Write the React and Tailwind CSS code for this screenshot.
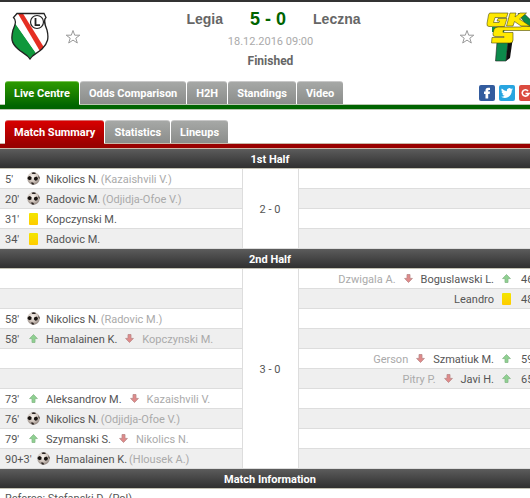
import React from "react";

function Ball() {
  return (
    <svg viewBox="0 0 13 13" className="h-[13px] w-[13px] shrink-0" aria-hidden="true">
      <defs>
        <radialGradient id="ballShade" cx="45%" cy="35%" r="65%">
          <stop offset="0" stopColor="#f7f1ec" />
          <stop offset="0.6" stopColor="#cfc4bc" />
          <stop offset="1" stopColor="#8e827c" />
        </radialGradient>
      </defs>
      <circle cx="6.5" cy="6.5" r="6.2" fill="url(#ballShade)" />
      <path d="M.8 5 2.800 4 4.600 5.200 4.400 7.600 2.200 8.200.6 6.800Z" fill="#17120f" />
      <path d="M7.200 5.400 9.400 4.600 11 6 10.300 8.300 8.200 8.700 6.800 7.300Z" fill="#17120f" />
      <path d="M4.400.8 6.800.3 9.200.9 8 2 5.400 1.900Z" fill="#2a2320" />
      <path d="M4 10.600 6 10.400 7.400 12.600 5 12.400Z" fill="#2a2320" />
      <path d="M11.400 3 12.600 5.400 12.600 7.200 11.600 5.200Z" fill="#3a302c" />
    </svg>
  );
}

function Arrow({ down }) {
  return (
    <svg viewBox="0 0 9 9" className={down ? "h-[9px] w-[9px] shrink-0 rotate-180" : "h-[9px] w-[9px] shrink-0"} aria-hidden="true">
      <path
        d="M4.500.5 8.400 4.600H6V8.500H3V4.600H.6Z"
        fill={down ? "#e08a8a" : "#8fd191"}
        stroke={down ? "#b98888" : "#86b888"}
        strokeWidth=".8"
      />
    </svg>
  );
}

function Icon({ type }) {
  return (
    <span className="flex w-[13px] shrink-0 justify-center">
      {type === "goal" && <Ball />}
      {type === "card" && (
        <span className="h-3 w-[9px] rounded-[1px] bg-linear-to-b from-[#f2e600] to-[#ffcb00]" />
      )}
      {type === "sub" && <Arrow />}
    </span>
  );
}

function HomeEvent({ event }) {
  return (
    <div className="flex items-center pl-[5px]">
      <span className="min-w-[22px] pt-[2px] pr-[5px]">{event.time}</span>
      <Icon type={event.type} />
      <span className="ml-[6px] pt-[2px]">{event.player}</span>
      {event.assist && <span className="ml-[2px] pt-[2px] text-[#aaa]">({event.assist})</span>}
      {event.out && (
        <span className="ml-2 flex items-center gap-2 text-[#aaa]">
          <Arrow down />
          <span className="pt-[2px]">{event.out}</span>
        </span>
      )}
    </div>
  );
}

function AwayEvent({ event }) {
  return (
    <div className="flex items-center justify-end">
      {event.out && (
        <span className="mr-2 flex items-center gap-2 text-[#aaa]">
          <span className="pt-[2px]">{event.out}</span>
          <Arrow down />
        </span>
      )}
      <span className="mr-[6px] pt-[2px]">{event.player}</span>
      <Icon type={event.type} />
      <span className="ml-2 w-[19px] pt-[2px]">{event.time}</span>
    </div>
  );
}

const halves = [
  {
    title: "1st Half",
    score: "2 - 0",
    rows: [
      { home: { time: "5'", type: "goal", player: "Nikolics N.", assist: "Kazaishvili V." } },
      { home: { time: "20'", type: "goal", player: "Radovic M.", assist: "Odjidja-Ofoe V." } },
      { home: { time: "31'", type: "card", player: "Kopczynski M." } },
      { home: { time: "34'", type: "card", player: "Radovic M." } },
    ],
  },
  {
    title: "2nd Half",
    score: "3 - 0",
    rows: [
      { away: { time: "46'", type: "sub", player: "Boguslawski L.", out: "Dzwigala A." } },
      { away: { time: "48'", type: "card", player: "Leandro" } },
      { home: { time: "58'", type: "goal", player: "Nikolics N.", assist: "Radovic M." } },
      { home: { time: "58'", type: "sub", player: "Hamalainen K.", out: "Kopczynski M." } },
      { away: { time: "59'", type: "sub", player: "Szmatiuk M.", out: "Gerson" } },
      { away: { time: "65'", type: "sub", player: "Javi H.", out: "Pitry P." } },
      { home: { time: "73'", type: "sub", player: "Aleksandrov M.", out: "Kazaishvili V." } },
      { home: { time: "76'", type: "goal", player: "Nikolics N.", assist: "Odjidja-Ofoe V." } },
      { home: { time: "79'", type: "sub", player: "Szymanski S.", out: "Nikolics N." } },
      { home: { time: "90+3'", type: "goal", player: "Hamalainen K.", assist: "Hlousek A." } },
    ],
  },
];

function Heading({ children }) {
  return (
    <tr>
      <th
        colSpan={3}
        className="h-5 border-b border-[#c4c2b4] bg-linear-to-b from-[#5c5c5c] to-[#303030] p-0 pt-[2px] text-center font-bold text-white"
      >
        {children}
      </th>
    </tr>
  );
}

function Tabs({ items, red }) {
  return (
    <nav className="flex h-6 items-start gap-px pl-[5px]">
      {items.map((name, i) => (
        <button
          key={name}
          type="button"
          className={
            i > 0
              ? "h-[23px] rounded-t-[3px] border-t border-[#c8c8c8] bg-linear-to-b from-[#a6a8a6] to-[#8b8d8b] px-[9px] font-bold whitespace-nowrap text-white"
              : red
                ? "relative h-[25px] rounded-t-[3px] border-t border-[#d86a6a] bg-linear-to-b from-[#d80000] to-[#990000] px-[9px] pb-[2px] font-bold whitespace-nowrap text-white"
                : "relative h-[25px] rounded-t-[3px] border-t border-[#7cc455] bg-linear-to-b from-[#2c9a00] to-[#006400] px-[9px] pb-[2px] font-bold whitespace-nowrap text-white"
          }
        >
          {name}
        </button>
      ))}
    </nav>
  );
}

function Star() {
  return (
    <button type="button" aria-label="Add to my teams" className="mt-[27px]">
      <svg viewBox="0 0 16 16" className="h-4 w-4">
        <path
          d="M8 1.500 9.700 6.200H14.800L10.800 9.200 12.300 14 8 11.100 3.700 14 5.200 9.200 1.200 6.200H6.300Z"
          fill="#fff"
          stroke="#999"
          strokeWidth="1"
        />
      </svg>
    </button>
  );
}

function LegiaCrest() {
  const outline =
    "M6 1.500H33L35 5.500C32 8 34 13 36 18 38 26 37 31 31 37 27 41 22 42 19 47 16 42 11 41 7 37 0 31 0 26 2 18 4 13 6 9 2.500 5.500Z";
  return (
    <svg viewBox="0 0 38 48" className="h-12 w-[38px]" role="img" aria-label="Legia">
      <defs>
        <clipPath id="shield">
          <path d={outline} />
        </clipPath>
      </defs>
      <g clipPath="url(#shield)">
        <path d="M0 0H38V48H0Z" fill="#fff" />
        <path d="M0 5 27 44 20 48H0Z" fill="#0f983c" />
        <path d="M0 2 3 1 31 42 27 44 1 7Z" fill="#fff" />
        <path d="M6 0H11L34 37 30 41Z" fill="#e52e22" />
      </g>
      <path d={outline} fill="none" stroke="#222" strokeWidth="1.300" />
      <circle cx="26" cy="10" r="6.500" fill="#fff" stroke="#222" strokeWidth="1.200" />
      <path d="M24.500 6V13.200H29" fill="none" stroke="#222" strokeWidth="1.800" />
    </svg>
  );
}

function LecznaCrest() {
  return (
    <svg viewBox="0 0 50 50" className="h-[50px] w-[50px]" role="img" aria-label="Leczna">
      <path d="M6 15H20L18 20H6Z" fill="#0c8a4b" />
      <path d="M11 30H22L20 49H9.500Z" fill="#0c8a4b" stroke="#222" strokeWidth=".6" />
      <path d="M22 29 27 25 24 46 20 49Z" fill="#111" />
      <path d="M32 1.500H38L50 13V16L41 14Z" fill="#0c8a4b" stroke="#222" strokeWidth=".5" />
      <g stroke="#4a4a10" strokeWidth=".6" strokeLinejoin="round" fill="#ffe900">
        <path d="M4 1H22L20.500 5.500H9L7.500 10.500H13L13.500 9H11L12 6.500H21L18.500 14.500H3Q.5 14.500 1 11.500L2.500 3Q3 1 4 1Z" />
        <path d="M24 1H30L29 5 34 1H40.500L33.500 7 44 14H35L28.500 9.500 27 14H20.500Z" />
        <path d="M50 14.500V18.500H17V20.500H27V28Q27 31 24 31H5.500L6 25.500H18V24.500H9Q6.500 24.500 7 21.500L8 17.500Q9 15 12 15H34L36 14.500Z" />
      </g>
    </svg>
  );
}

function Share() {
  return (
    <div className="flex gap-1 pt-1">
      <a href="#facebook" aria-label="Facebook" className="block h-4 w-4 rounded-[2px] bg-[#335c9e]">
        <svg viewBox="0 0 16 16" className="h-4 w-4">
          <path d="M6.500 13.500V9H5V6.600H6.500V5.300Q6.500 2.800 9 2.800H11V5H9.800Q9.200 5 9.200 5.700V6.600H11L10.700 9H9.200V13.500Z" fill="#fff" />
        </svg>
      </a>
      <a href="#twitter" aria-label="Twitter" className="block h-4 w-4 rounded-[2px] bg-[#28a5e0]">
        <svg viewBox="0 0 24 24" className="h-4 w-4">
          <path
            transform="translate(3 3) scale(.75)"
            d="M23.950 4.570a10 10 0 0 1-2.820.77 4.960 4.960 0 0 0 2.160-2.720c-.95.550-2 .960-3.130 1.180a4.920 4.920 0 0 0-8.380 4.480A13.900 13.900 0 0 1 1.640 3.160a4.920 4.920 0 0 0 1.520 6.570 4.900 4.900 0 0 1-2.230-.610v.060a4.920 4.920 0 0 0 3.950 4.830 5 5 0 0 1-2.210.080 4.940 4.940 0 0 0 4.600 3.420A9.870 9.870 0 0 1 0 19.540a14 14 0 0 0 7.550 2.210c9.050 0 14-7.500 14-13.980l-.02-.630a9.900 9.900 0 0 0 2.420-2.570Z"
            fill="#fff"
          />
        </svg>
      </a>
      <a href="#google" aria-label="Google Plus" className="block h-4 w-4 rounded-[2px] bg-[#db4b40]">
        <svg viewBox="0 0 16 16" className="h-4 w-4">
          <path d="M9 6A3.200 3.200 0 1 0 9.600 8.500H6.500M12.500 6.500V10.500M10.500 8.500H14.500" fill="none" stroke="#fff" strokeWidth="1.600" />
        </svg>
      </a>
    </div>
  );
}

export default function App() {
  return (
    <div className="h-screen overflow-hidden bg-white font-[Roboto,sans-serif] text-[11px] leading-[15px] text-[#555]">
      <div className="w-full min-w-[540px] border-t-2 border-[#333]">
        <header className="grid h-[79px] grid-cols-[1fr_auto_1fr] items-start pr-1 pl-[11px]">
          <div className="flex items-start gap-4">
            <div className="pt-[10px]"><LegiaCrest /></div>
            <Star />
          </div>
          <div className="text-center">
            <div className="flex items-center justify-center gap-[27px] pt-[5px] font-['Liberation_Sans',Arial,sans-serif] font-bold">
              <a href="#legia" className="text-[14px] leading-6 text-[#666]">Legia</a>
              <span className="text-[18px] leading-6 text-[#006400]">5 - 0</span>
              <a href="#leczna" className="text-[14px] leading-6 text-[#666]">Leczna</a>
            </div>
            <p className="mt-[3px] pr-[6px] text-[#aaa]">18.12.2016 09:00</p>
            <p className="mt-[5px] pr-[6px] text-[12px] font-bold text-[#666]">Finished</p>
          </div>
          <div className="flex items-start justify-end gap-[11px]">
            <Star />
            <div className="pt-[10px]"><LecznaCrest /></div>
          </div>
        </header>

        <div className="flex items-start justify-between pr-[5px]">
          <Tabs items={["Live Centre", "Odds Comparison", "H2H", "Standings", "Video"]} />
          <Share />
        </div>
        <div className="-mt-px h-[6px] border-y border-[#b9c8b0] bg-[#006400]" />
        <div className="pt-[10px]">
          <Tabs red items={["Match Summary", "Statistics", "Lineups"]} />
          <div className="-mt-px h-[6px] border-y border-[#c9b8a8] bg-[#990000]" />
        </div>

        <table className="w-full table-fixed border-separate border-spacing-0">
          <colgroup>
            <col />
            <col className="w-[57px]" />
            <col />
          </colgroup>
          {halves.map((half) => (
            <tbody key={half.title}>
              <Heading>{half.title}</Heading>
              {half.rows.map((row, i) => (
                <tr key={i} className="odd:bg-[#efefef]">
                  <td className="h-5 border-b border-[#ddd] p-0">
                    {row.home && <HomeEvent event={row.home} />}
                  </td>
                  {i === 0 && (
                    <td rowSpan={half.rows.length} className="border-x border-b border-[#ddd] bg-white p-0 pt-[2px] text-center">
                      {half.score}
                    </td>
                  )}
                  <td className="h-5 border-b border-[#ddd] p-0">
                    {row.away && <AwayEvent event={row.away} />}
                  </td>
                </tr>
              ))}
            </tbody>
          ))}
          <tbody>
            <Heading>Match Information</Heading>
          </tbody>
        </table>
        <p className="px-[5px] py-[2px]">Referee: Stefanski D. (Pol)</p>
      </div>
    </div>
  );
}
